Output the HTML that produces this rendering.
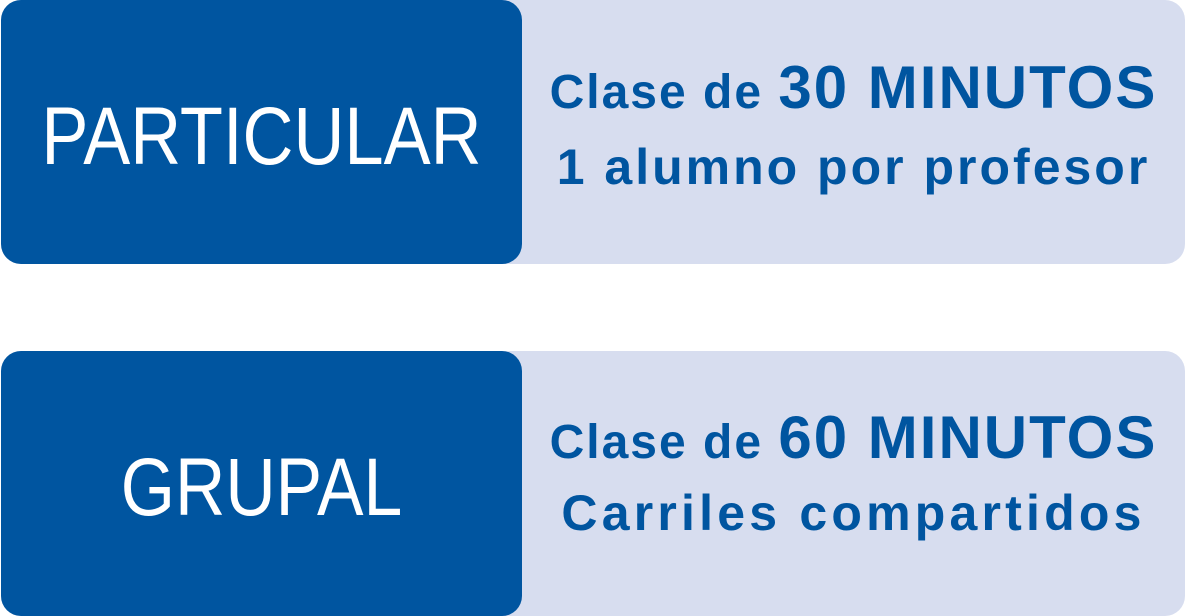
<!DOCTYPE html>
<html><head><meta charset="utf-8"><style>
*{margin:0;padding:0;box-sizing:border-box}
body{width:1185px;height:616px;background:#fff;position:relative;overflow:hidden;font-family:"Liberation Sans",Arial,sans-serif}
.card{position:absolute;left:1px;width:1184px;height:264px;background:#d7ddef;border-radius:20px}
.dark{position:absolute;left:0;top:0;width:521px;height:100%;background:#0055a0;border-radius:20px}
.big{position:absolute;left:0;width:521px;text-align:center;color:#fff;font-size:82px;white-space:nowrap}
.ln{position:absolute;left:521px;width:663px;text-align:center;color:#0055a0;font-weight:bold;white-space:nowrap}
.l1{font-size:48px;letter-spacing:2px}
.l1 b{font-size:60px;letter-spacing:2px}
.l2{font-size:50px;letter-spacing:3px}
</style></head><body>
<div class="card" style="top:0">
 <div class="dark"></div>
 <div class="big" style="top:90px;transform:scaleX(0.86)">PARTICULAR</div>
 <div class="ln l1" style="top:53px">Clase de <b>30 MINUTOS</b></div>
 <div class="ln l2" style="top:138px">1 alumno por profesor</div>
</div>
<div class="card" style="top:351px;height:265px">
 <div class="dark"></div>
 <div class="big" style="top:90px;transform:scaleX(0.85)">GRUPAL</div>
 <div class="ln l1" style="top:52px">Clase de <b>60 MINUTOS</b></div>
 <div class="ln l2" style="top:133px;letter-spacing:4.2px">Carriles compartidos</div>
</div>
</body></html>
